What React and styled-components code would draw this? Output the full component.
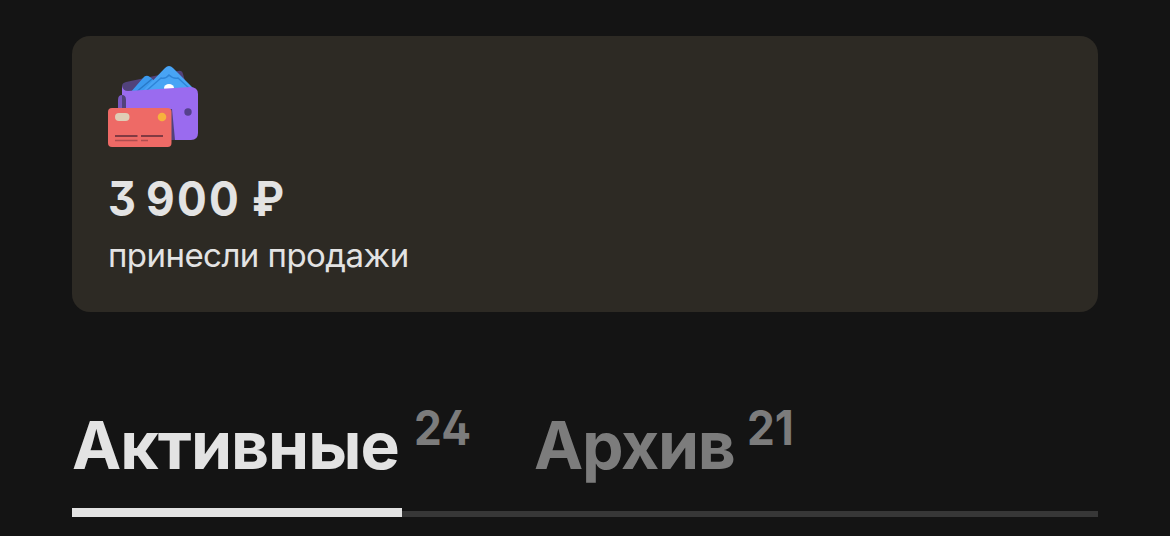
import React from 'react';
import styled, { createGlobalStyle } from 'styled-components';

const GlobalStyle = createGlobalStyle`
  * {
    box-sizing: border-box;
  }

  body {
    margin: 0;
    background-color: #141414;
    overflow: hidden;
  }
`;

const Page = styled.main`
  height: 536px;
  padding: 36px 72px 0;
  background-color: #141414;
  color: #e3e3e3;
  font-family: Inter, 'Open Sans', sans-serif;
  overflow: hidden;
`;

const SalesCard = styled.section`
  height: 276px;
  padding: 30px 36px;
  border-radius: 18px;
  background-color: #2d2a24;
`;

const WalletIcon = styled.svg`
  display: block;
  width: 90px;
  height: 81px;
`;

const Amount = styled.div`
  display: flex;
  margin-top: 22px;
  font-size: 48px;
  font-weight: 700;
  font-feature-settings: 'cv09';
  line-height: 60px;
`;

const AmountPart = styled.span`
  width: ${({ $width }) => $width}px;
  letter-spacing: ${({ $spacing }) => $spacing || 0}px;
  white-space: nowrap;
  transform: scaleX(${({ $stretch }) => $stretch || 1});
  transform-origin: left;
`;

const Caption = styled.div`
  margin-top: 5px;
  font-size: 33px;
  line-height: 42px;
  letter-spacing: -0.55px;
`;

const Tabs = styled.nav`
  display: flex;
  height: 114px;
  margin-top: 91px;
  box-shadow: inset 0 -6px #373737;
`;

const Tab = styled.div`
  display: flex;
  margin-right: 64px;
  color: ${({ $active }) => ($active ? '#e3e3e3' : '#7c7c7c')};
`;

const TabLabel = styled.div`
  width: ${({ $width }) => $width}px;
  border-bottom: ${({ $active }) => ($active ? '9px solid #e3e3e3' : 'none')};
  font-size: 66px;
  font-weight: 700;
  line-height: 84px;
  letter-spacing: ${({ $spacing }) => $spacing}px;
  white-space: nowrap;
`;

const Count = styled.span`
  width: 56px;
  margin: -5px 0 0 12px;
  color: #7c7c7c;
  font-size: 48px;
  font-weight: 700;
  font-feature-settings: 'cv02';
  line-height: 60px;
  transform: scaleX(0.92);
  transform-origin: left;
`;

const Wallet = () => (
  <WalletIcon viewBox="0 0 90 81" aria-hidden="true">
    <path d="M14 30V20q0-3 4-4L70 5q4-1 5 3l4 14v12H14Z" fill="#51427b" />
    <path d="M22 27 35 12q3-4 7-1l15 14v7H22Z" fill="#3b99ee" />
    <path d="M31 29 57 2q4-4 8 0l20 20v8H31Z" fill="#48a4f5" />
    <path d="M37 26 53 12q5 1 8-3 4 4 9 3l11 10" fill="none" stroke="#2e84d8" strokeWidth="1.4" />
    <path d="m27 27 17-14" fill="none" stroke="#2878c6" strokeWidth="1.4" />
    <ellipse cx="61" cy="22" rx="5" ry="4" fill="#fff" />
    <path d="M14 20q1 5 6 5l62-4q8 0 8 7v39q0 7-7 7H14Z" fill="#9a6bef" />
    <path d="M64 43 67 74h-5V43Z" fill="#51427b" />
    <path d="M14 29q-4 0-4 5v9h4Z" fill="#7958bf" />
    <path d="M14 29q4 0 4 5v9h-4Z" fill="#51427b" />
    <circle cx="80" cy="46" r="3.7" fill="#55418c" />
    <rect y="42" width="63.5" height="39" rx="4" fill="#ee6a66" />
    <rect x="7" y="47" width="14.5" height="8" rx="4" fill="#dfcdb6" />
    <circle cx="54" cy="51" r="4.3" fill="#f7b23d" />
    <path d="M7 70h22.5M33 70h22" stroke="#813a42" strokeWidth="1.8" />
    <path d="M7 74.5h22.5M33 74.5h7" stroke="#af4d50" strokeWidth="1.4" />
  </WalletIcon>
);

const App = () => {
  return (
    <>
      <GlobalStyle />
      <Page>
        <SalesCard>
          <Wallet />
          <Amount>
            <AmountPart $width={38} $stretch={0.9}>3</AmountPart>
            <AmountPart $width={106} $stretch={0.92} $spacing={2.5}>900</AmountPart>
            <AmountPart $width={40} $stretch={0.9}>₽</AmountPart>
          </Amount>
          <Caption>принесли продажи</Caption>
        </SalesCard>
        <Tabs>
          <Tab $active>
            <TabLabel $active $width={330} $spacing={-1}>Активные</TabLabel>
            <Count>24</Count>
          </Tab>
          <Tab>
            <TabLabel $width={201} $spacing={-1.3}>Архив</TabLabel>
            <Count>21</Count>
          </Tab>
        </Tabs>
      </Page>
    </>
  );
};

export default App;
